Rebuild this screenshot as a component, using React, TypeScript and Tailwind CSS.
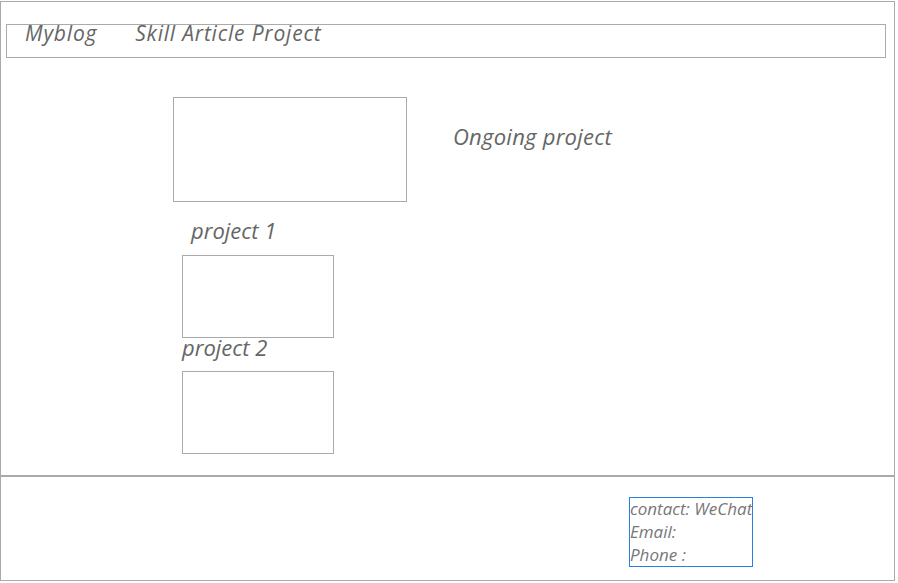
export default function App() {
  return (
    <div className="w-[895px] pt-px bg-white text-[#666] italic" style={{ fontFamily: '"Open Sans", "Noto Sans", sans-serif' }}>
      <main className="h-[475px] border border-[#aaa]">
        <nav className="mt-[22px] ml-[5px] w-[880px] h-[34px] border border-[#aaa] flex items-center gap-[38px] pl-[18px] text-[21px] tracking-[0.8px] leading-none pb-[15px]">
          <span>Myblog</span>
          <span>Skill Article Project</span>
        </nav>

        <section className="mt-[39px] ml-[172px] flex flex-col">
          <div className="flex items-start">
            <div className="w-[234px] h-[105px] border border-[#aaa]" />
            <h2 className="ml-[46px] mt-[24px] text-[22px] tracking-[0.25px] leading-[30px] font-normal">Ongoing project</h2>
          </div>
          <p className="ml-[18px] mt-[13px] text-[22px] leading-[30px]">project 1</p>
          <div className="ml-[9px] mt-[10px] w-[152px] h-[83px] border border-[#aaa]" />
          <p className="ml-[9px] -mt-[4px] text-[22px] leading-[26px]">project 2</p>
          <div className="ml-[9px] mt-[11px] w-[152px] h-[83px] border border-[#aaa]" />
        </section>
      </main>

      <footer className="h-[105px] border border-[#aaa] pt-[20px] pl-[628px]">
        <div className="w-[124px] h-[70px] border border-[#2a7de1] text-[17px] leading-[23px] text-[#777] whitespace-nowrap">
          <div className="-mt-px">
            <p>contact: WeChat</p>
            <p>Email:</p>
            <p>Phone :</p>
          </div>
        </div>
      </footer>
    </div>
  );
}
